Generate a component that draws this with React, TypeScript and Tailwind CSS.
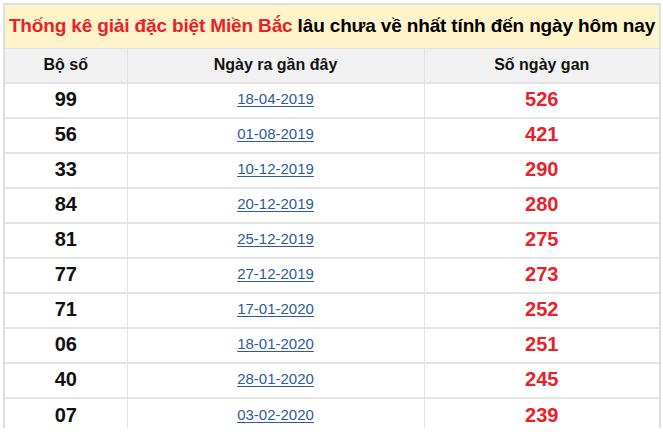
import React from "react";

const rows = [
  { so: "99", ngay: "18-04-2019", gan: "526" },
  { so: "56", ngay: "01-08-2019", gan: "421" },
  { so: "33", ngay: "10-12-2019", gan: "290" },
  { so: "84", ngay: "20-12-2019", gan: "280" },
  { so: "81", ngay: "25-12-2019", gan: "275" },
  { so: "77", ngay: "27-12-2019", gan: "273" },
  { so: "71", ngay: "17-01-2020", gan: "252" },
  { so: "06", ngay: "18-01-2020", gan: "251" },
  { so: "40", ngay: "28-01-2020", gan: "245" },
  { so: "07", ngay: "03-02-2020", gan: "239" },
];

export default function App() {
  return (
    <div className="w-[663px] h-[447px] bg-white font-['Liberation_Sans',Arial,sans-serif] pt-[3px] pl-[3px] pr-[2px]">
      <div className="h-[425px] overflow-hidden border-x-2 border-t-2 border-[#dedede]">
        <div className="h-[43px] bg-[#fff3c9] flex items-center justify-center text-[19px] font-bold tracking-[-0.15px] whitespace-nowrap">
          <span className="text-[#e8212a]">Thống kê giải đặc biệt Miền Bắc</span>
          <span className="text-black">&nbsp;lâu chưa về nhất tính đến ngày hôm nay</span>
        </div>
        <table className="w-full table-fixed border-collapse">
          <colgroup>
            <col className="w-[122px]" />
            <col className="w-[297px]" />
            <col />
          </colgroup>
          <thead>
            <tr className="h-[34px] bg-[#f1f1f1] text-[16px] font-bold text-[#111]">
              <th className="border-t border-[#e2e2e2]">Bộ số</th>
              <th className="border-t border-l border-[#e2e2e2] font-bold">Ngày ra gần đây</th>
              <th className="border-t border-l border-[#e2e2e2] font-bold">Số ngày gan</th>
            </tr>
          </thead>
          <tbody>
            {rows.map((r) => (
              <tr key={r.so} className="h-[35px] text-center">
                <td className="border-t-2 border-[#e4e4e4] text-[20px] font-bold text-[#111] pb-[2px]">{r.so}</td>
                <td className="border-t-2 border-l border-[#e4e4e4] pb-[2px]">
                  <a href="#" className="text-[15px] text-[#2e5a9e] underline underline-offset-2">
                    {r.ngay}
                  </a>
                </td>
                <td className="border-t-2 border-l border-[#e4e4e4] text-[20px] font-bold text-[#e8212a] pb-[2px]">{r.gan}</td>
              </tr>
            ))}
          </tbody>
        </table>
      </div>
    </div>
  );
}
